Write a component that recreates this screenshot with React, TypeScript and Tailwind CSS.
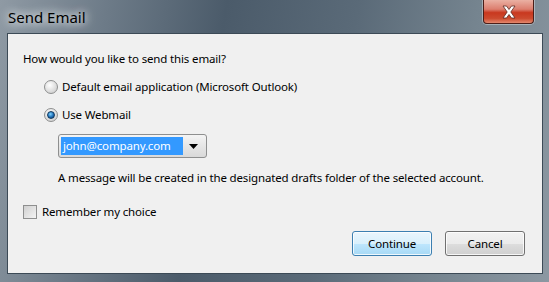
import React from "react";

const font = { fontFamily: '"Noto Sans", "Open Sans", Arial, sans-serif' };

const Radio: React.FC<{ checked?: boolean }> = ({ checked }) => (
  <span className="w-[14px] h-[14px] rounded-full border border-[#8e8f8f] bg-[radial-gradient(circle_at_40%_35%,#ffffff,#d6d6d6_70%,#c8c8c8)] flex items-center justify-center shrink-0">
    {checked && (
      <span className="w-[8px] h-[8px] rounded-full bg-[radial-gradient(circle_at_40%_35%,#7fd4ff,#1f6fb8_55%,#0b3a6e)] border border-[#123a5e]" />
    )}
  </span>
);

export default function App() {
  return (
    <div
      className="w-[549px] h-[282px] flex flex-col bg-[linear-gradient(100deg,#8f9aa4_0%,#6d7b88_18%,#4b5b6a_38%,#5a6a78_60%,#75848f_80%,#8c98a2_100%)] text-[11.5px] tracking-[-0.15px] text-black overflow-hidden"
      style={font}
    >
      {/* title bar */}
      <div className="h-[33px] flex items-start justify-between shrink-0">
        <div className="pl-[8px] pt-[7px] text-[15px] leading-[20px] tracking-normal text-black [text-shadow:0_0_8px_#ffffff,0_0_12px_#e8eef2]">
          Send Email
        </div>
        <div className="mr-[15px] w-[51px] h-[24px] rounded-b-[4px] border border-t-0 border-[#4b1e18] bg-[linear-gradient(#eab0a3_0%,#dc7e6e_40%,#c9381f_55%,#cc4a2e_80%,#e3886e_100%)] flex items-center justify-center shadow-[0_0_0_1px_rgba(255,255,255,0.35)]">
          <svg width="16" height="14" viewBox="0 0 16 14">
            <path
              d="M2 1h3.5L8 4.5 10.5 1H14L9.8 7 14 13h-3.5L8 9.5 5.5 13H2l4.2-6z"
              fill="#ffffff"
              stroke="#5a2a22"
              strokeWidth="0.8"
            />
          </svg>
        </div>
      </div>

      {/* content */}
      <div className="mx-[7px] mr-[6px] h-[241px] bg-[#f0f0f0] border border-[#3c4a56] flex flex-col pl-[15px] pr-[17px]">
        <div className="mt-[17px] leading-[16px]">How would you like to send this email?</div>

        <div className="mt-[12px] ml-[21px] flex items-center gap-[4px] leading-[16px]">
          <Radio />
          <span>Default email application (Microsoft Outlook)</span>
        </div>
        <div className="mt-[12px] ml-[21px] flex items-center gap-[4px] leading-[16px]">
          <Radio checked />
          <span>Use Webmail</span>
        </div>

        <div className="mt-[11px] ml-[35px] w-[149px] h-[24px] border border-[#8e8f8f] rounded-[3px] bg-[linear-gradient(#f4f4f4,#e6e6e6_50%,#d9d9d9)] flex items-center p-[2px]">
          <span className="bg-[#3399ff] text-white h-[18px] w-[122px] pl-[2px] leading-[18px]">
            john@company.com
          </span>
          <span className="flex-1 flex justify-center">
            <svg width="9" height="5" viewBox="0 0 9 5">
              <path d="M0 0h9L4.5 5z" fill="#000" />
            </svg>
          </span>
        </div>

        <div className="mt-[12px] ml-[35px] leading-[16px]">
          A message will be created in the designated drafts folder of the selected account.
        </div>

        <div className="mt-[18px] flex items-center gap-[5px] leading-[16px]">
          <span className="w-[14px] h-[14px] border border-[#8e8f8f] bg-[linear-gradient(135deg,#d0d0d0,#f4f4f4)] shrink-0" />
          <span>Remember my choice</span>
        </div>

        <div className="mt-[11px] flex justify-end gap-[13px]">
          <button className="w-[80px] h-[25px] rounded-[3px] border border-[#3c7fb1] bg-[linear-gradient(#eaf6fd_0%,#d9f0fc_50%,#bee6fd_51%,#a7d9f5_100%)] shadow-[inset_0_0_0_1px_rgba(255,255,255,0.8)] leading-[22px]">
            Continue
          </button>
          <button className="w-[80px] h-[25px] rounded-[3px] border border-[#707070] bg-[linear-gradient(#f2f2f2_0%,#ebebeb_50%,#dddddd_51%,#cfcfcf_100%)] shadow-[inset_0_0_0_1px_rgba(255,255,255,0.8)] leading-[22px]">
            Cancel
          </button>
        </div>
      </div>
    </div>
  );
}
